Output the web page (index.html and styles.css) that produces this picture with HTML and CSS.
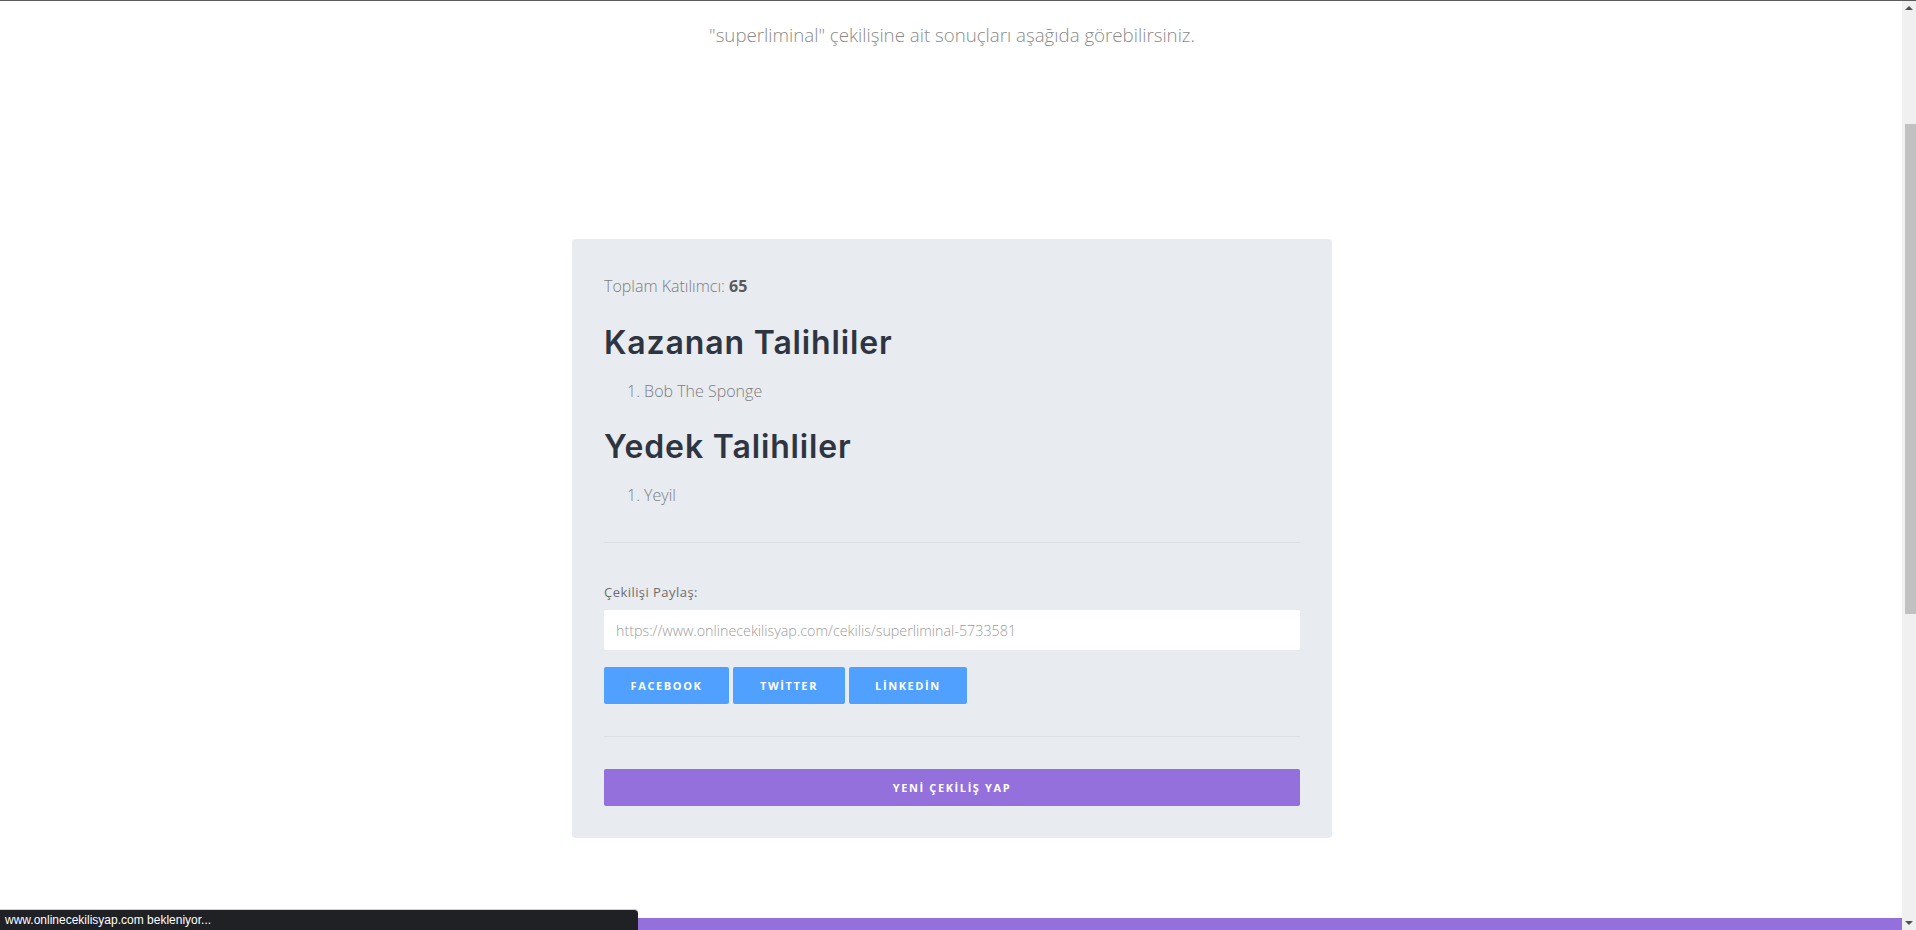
FILE: index.html
```html
<!DOCTYPE html>
<html lang="tr">
<head>
<meta charset="utf-8">
<title>Çekiliş Sonuçları</title>
<link rel="stylesheet" href="styles.css">
</head>
<body>
<div class="window">
  <div class="page">
    <p class="subtitle">"superliminal" çekilişine ait sonuçları aşağıda görebilirsiniz.</p>
    <div class="card">
      <p class="total">Toplam Katılımcı: <strong>65</strong></p>
      <h2 class="heading">Kazanan Talihliler</h2>
      <ol class="names">
        <li>Bob The Sponge</li>
      </ol>
      <h2 class="heading heading-second">Yedek Talihliler</h2>
      <ol class="names">
        <li>Yeyil</li>
      </ol>
      <hr class="divider divider-first">
      <label class="share-label" for="share-url">Çekilişi Paylaş:</label>
      <input class="share-input" id="share-url" type="text" readonly placeholder="https://www.onlinecekilisyap.com/cekilis/superliminal-5733581">
      <div class="share-buttons">
        <a class="btn btn-blue btn-facebook" href="#">Facebook</a>
        <a class="btn btn-blue btn-twitter" href="#">Twİtter</a>
        <a class="btn btn-blue btn-linkedin" href="#">Lİnkedİn</a>
      </div>
      <hr class="divider divider-second">
      <a class="btn btn-purple" href="#">Yenİ Çekİlİş Yap</a>
    </div>
    <div class="footer-band"></div>
    <div class="status-bar">www.onlinecekilisyap.com bekleniyor...</div>
  </div>
  <div class="scrollbar">
    <div class="scroll-arrow scroll-up"></div>
    <div class="scroll-track">
      <div class="scroll-thumb"></div>
    </div>
    <div class="scroll-arrow scroll-down"></div>
  </div>
</div>
</body>
</html>
```

FILE: styles.css
```css
* {
  box-sizing: border-box;
}

html, body {
  margin: 0;
  padding: 0;
  height: 100%;
  overflow: hidden;
  background: #ffffff;
}

body {
  font-family: "Open Sans", "Liberation Sans", sans-serif;
  font-weight: 300;
  color: #777777;
}

.window {
  display: flex;
  height: 930px;
  border-top: 1px solid #5a5a5a;
}

.page {
  position: relative;
  flex: 1;
  display: flex;
  flex-direction: column;
  align-items: center;
}

.subtitle {
  margin: 20px 0 0;
  font-size: 18.7px;
  line-height: 28px;
  color: #8a8a8a;
  padding-left: 2px;
}

.card {
  margin-top: 190px;
  margin-left: 2px;
  width: 760px;
  background: #e8ebf0;
  border-radius: 4px;
  padding: 35px 32px 32px;
  display: flex;
  flex-direction: column;
}

.total {
  margin: 0;
  font-size: 16px;
  line-height: 24px;
  color: #7d7d7d;
}

.total strong {
  font-weight: 700;
  color: #5a5a5a;
}

.heading {
  margin: 25px 0 0;
  font-family: "Inter", "DejaVu Sans", sans-serif;
  font-weight: 600;
  font-size: 32px;
  line-height: 40px;
  color: #2f3540;
  letter-spacing: 0.85px;
}

.heading-second {
  margin-top: 24px;
}

.names {
  margin: 16px 0 0;
  padding: 0 0 0 23px;
  list-style-position: inside;
  font-size: 16px;
  line-height: 24px;
  color: #7d7d7d;
}

.divider {
  width: 100%;
  margin: 0;
  border: 0;
  border-top: 1px solid #dcdfe4;
}

.divider-first {
  margin-top: 35px;
}

.share-label {
  margin-top: 39px;
  font-size: 13px;
  line-height: 20px;
  font-weight: 400;
  color: #6e6e6e;
  letter-spacing: 0.45px;
}

.share-input {
  margin-top: 8px;
  width: 100%;
  height: 40px;
  border: 0;
  border-radius: 2px;
  background: #ffffff;
  padding: 0 12px;
  font-family: "Open Sans", "Liberation Sans", sans-serif;
  font-weight: 300;
  font-size: 14.3px;
  color: #999999;
  outline: none;
}

.share-input::placeholder {
  color: #9c9c9c;
  opacity: 1;
}

.share-buttons {
  margin-top: 17px;
  display: flex;
  gap: 4px;
}

.btn {
  display: block;
  height: 37px;
  line-height: 37px;
  border-radius: 2px;
  font-family: "Open Sans", "Liberation Sans", sans-serif;
  font-weight: 700;
  font-size: 11px;
  letter-spacing: 1.6px;
  text-transform: uppercase;
  text-decoration: none;
  color: #ffffff;
  text-align: center;
}

.btn-blue {
  background: #50a1ff;
}

.btn-facebook {
  width: 125px;
}

.btn-twitter {
  width: 112px;
}

.btn-linkedin {
  width: 118px;
}

.divider-second {
  margin-top: 32px;
}

.btn-purple {
  margin-top: 32px;
  width: 100%;
  background: #9370db;
}

.footer-band {
  position: absolute;
  left: 0;
  right: 0;
  bottom: 0;
  height: 12px;
  background: #9370db;
}

.status-bar {
  position: absolute;
  left: 0;
  bottom: 0;
  width: 638px;
  height: 21px;
  background: #202124;
  border-top: 1px solid #d0d0d0;
  border-top-right-radius: 4px;
  color: #ffffff;
  font-family: "Liberation Sans", sans-serif;
  font-weight: 400;
  font-size: 12px;
  line-height: 20px;
  padding-left: 5px;
}

.scrollbar {
  width: 14px;
  background: #f0f0f0;
  display: flex;
  flex-direction: column;
}

.scroll-arrow {
  height: 14px;
  display: flex;
  align-items: center;
  justify-content: center;
}

.scroll-up::before {
  content: "";
  border-left: 4px solid transparent;
  border-right: 4px solid transparent;
  border-bottom: 4px solid #505050;
}

.scroll-down::before {
  content: "";
  border-left: 4px solid transparent;
  border-right: 4px solid transparent;
  border-top: 4px solid #505050;
}

.scroll-track {
  flex: 1;
  padding-left: 3px;
}

.scroll-thumb {
  margin-top: 109px;
  height: 490px;
  background: #c1c1c1;
}
```
